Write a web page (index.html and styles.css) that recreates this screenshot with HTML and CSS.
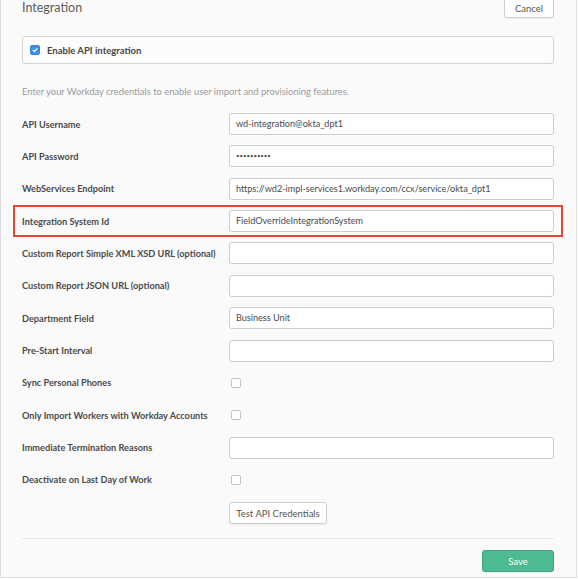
FILE: index.html
```html
<!DOCTYPE html>
<html>
<head>
<meta charset="utf-8">
<link rel="stylesheet" href="styles.css">
</head>
<body>
<div class="panel">
  <div class="header">
    <h1 class="title">Integration</h1>
    <button class="btn btn-cancel">Cancel</button>
  </div>
  <div class="enable-box">
    <span class="cb cb-checked">
      <svg width="10" height="10" viewBox="0 0 10 10"><path d="M2.5 5.2 L4.3 7 L7.6 2.9" fill="none" stroke="#fff" stroke-width="1.3" stroke-linecap="round" stroke-linejoin="round"/></svg>
    </span>
    <span class="enable-label">Enable API integration</span>
  </div>
  <p class="desc">Enter your Workday credentials to enable user import and provisioning features.</p>
  <div class="form">
    <div class="row"><label class="lbl">API Username</label><div class="field"><div class="input">wd-integration@okta_dpt1</div></div></div>
    <div class="row"><label class="lbl">API Password</label><div class="field"><div class="input pw">••••••••••</div></div></div>
    <div class="row"><label class="lbl">WebServices Endpoint</label><div class="field"><div class="input">https://wd2-impl-services1.workday.com/ccx/service/okta_dpt1</div></div></div>
    <div class="row highlight"><label class="lbl">Integration System Id</label><div class="field"><div class="input">FieldOverrideIntegrationSystem</div></div></div>
    <div class="row"><label class="lbl">Custom Report Simple XML XSD URL (optional)</label><div class="field"><div class="input"></div></div></div>
    <div class="row"><label class="lbl">Custom Report JSON URL (optional)</label><div class="field"><div class="input"></div></div></div>
    <div class="row"><label class="lbl">Department Field</label><div class="field"><div class="input">Business Unit</div></div></div>
    <div class="row"><label class="lbl">Pre-Start Interval</label><div class="field"><div class="input"></div></div></div>
    <div class="row"><label class="lbl">Sync Personal Phones</label><div class="field"><span class="cb"></span></div></div>
    <div class="row"><label class="lbl">Only Import Workers with Workday Accounts</label><div class="field"><span class="cb"></span></div></div>
    <div class="row"><label class="lbl">Immediate Termination Reasons</label><div class="field"><div class="input"></div></div></div>
    <div class="row"><label class="lbl">Deactivate on Last Day of Work</label><div class="field"><span class="cb"></span></div></div>
    <div class="row row-test"><span class="lbl"></span><div class="field"><button class="btn btn-test">Test API Credentials</button></div></div>
  </div>
  <div class="footer">
    <button class="btn btn-save">Save</button>
  </div>
</div>
</body>
</html>
```

FILE: styles.css
```css
* { box-sizing: border-box; }
html, body { margin: 0; padding: 0; background: #fff; }
body {
  font-family: Lato, "Open Sans", Arial, sans-serif;
  color: #4a4a4a;
  overflow: hidden;
}
.panel {
  width: 577px;
  height: 578px;
  background: #fafafa;
  border: 1px solid #dedede;
  border-top: none;
  padding: 0 22px 0 21px;
  overflow: hidden;
}
.header {
  display: flex;
  justify-content: space-between;
  align-items: flex-start;
  height: 18px;
}
.title {
  margin: 0;
  font-size: 12.5px;
  font-weight: 400;
  line-height: 15px;
  color: #5a5a5a;
}
.btn {
  font-family: inherit;
  background: #fff;
  border: 1px solid #cfcfcf;
  border-radius: 3px;
  color: #555;
  font-size: 9.5px;
  cursor: pointer;
  box-shadow: 0 1px 1px rgba(0,0,0,0.06);
}
.btn-cancel {
  width: 50px;
  height: 24px;
  margin-top: -6px;
  padding: 5px 0 0;
}
.enable-box {
  margin-top: 18px;
  height: 28px;
  border: 1px solid #d4d4d4;
  border-radius: 3px;
  background: #fcfcfc;
  display: flex;
  align-items: center;
  padding-left: 7px;
  gap: 7px;
}
.cb {
  display: inline-block;
  width: 10px;
  height: 10px;
  border: 1px solid #c4c4c4;
  border-radius: 2px;
  background: #fff;
}
.cb-checked {
  background: #3f8ee8;
  border-color: #3b84d8;
  display: flex;
  align-items: center;
  justify-content: center;
}
.cb-checked svg { display: block; }
.enable-label {
  font-size: 9.5px;
  font-weight: 700;
  color: #444;
}
.desc {
  margin: 20px 0 0;
  font-size: 9.4px;
  line-height: 16px;
  color: #9a9a9a;
}
.form {
  margin-top: 13px;
  display: flex;
  flex-direction: column;
  gap: 10.36px;
}
.row {
  display: flex;
  align-items: center;
  height: 22px;
  position: relative;
}
.highlight::after {
  content: "";
  position: absolute;
  top: -5px;
  bottom: -5px;
  left: -9px;
  right: -9px;
  border: 2px solid #e5452f;
}
.lbl {
  width: 207px;
  flex: none;
  font-size: 9.2px;
  font-weight: 700;
  color: #4a4a4a;
  white-space: nowrap;
}
.field {
  flex: 1;
  display: flex;
  align-items: center;
  height: 22px;
}
.field .cb { margin-left: 2px; }
.input {
  width: 100%;
  height: 22px;
  border: 1px solid #cdcdcd;
  border-radius: 3px;
  background: #fff;
  font-size: 9.1px;
  line-height: 20px;
  padding-left: 6px;
  color: #4a4a4a;
  white-space: nowrap;
  overflow: hidden;
}
.pw { font-size: 6px; letter-spacing: 0; }
.row-test { margin-top: 1px; }
.btn-test {
  height: 22px;
  width: 98px;
  padding: 0;
}
.footer {
  margin-top: 14px;
  border-top: 1px solid #e6e6e6;
  display: flex;
  justify-content: flex-end;
  padding-top: 11px;
}
.btn-save {
  width: 72px;
  height: 22px;
  background: #4cbb91;
  border-color: #3fa57e;
  color: #fff;
  font-size: 9.5px;
  padding: 0;
}
```
